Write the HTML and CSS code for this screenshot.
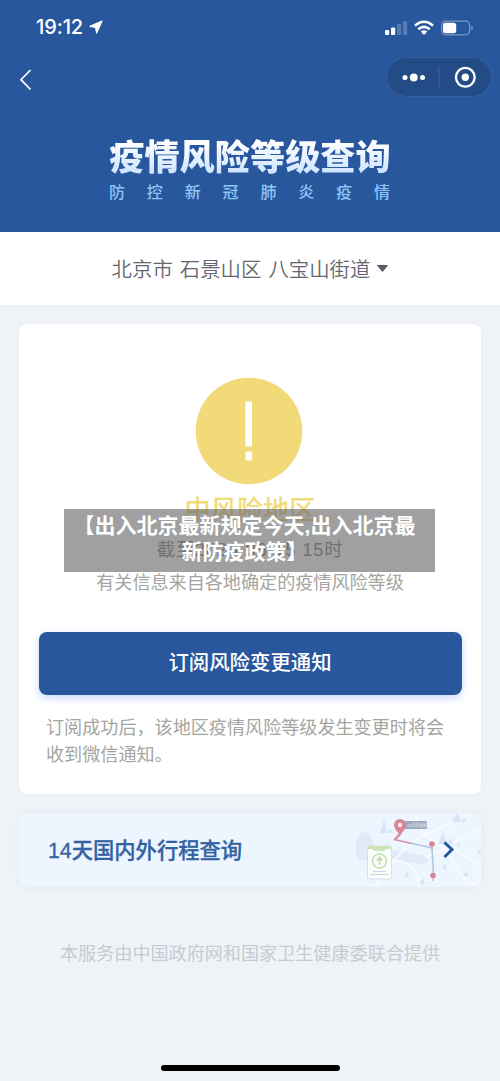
FILE: index.html
```html
<!DOCTYPE html>
<html lang="zh-CN">
<head>
<meta charset="utf-8">
<title>疫情风险等级查询</title>
<link rel="stylesheet" href="styles.css">
</head>
<body>
<header class="hero">
  <div class="status">
    <span class="clock">19:12</span>
    <svg class="locate" width="14" height="14" viewBox="0 0 14 14"><path d="M13 1L1 6.300L6.600 7.500L7.600 13Z" fill="#fff" stroke="#fff" stroke-width="1.200" stroke-linejoin="round"/></svg>
    <svg class="signals" width="92" height="18" viewBox="0 0 92 18">
      <g fill="#fff"><rect x="1" y="10" width="4.2" height="5" rx="1"/><rect x="7" y="7.5" width="4.2" height="7.5" rx="1"/><g opacity=".22"><rect x="13" y="4" width="4.2" height="11" rx="1"/><rect x="19" y="1" width="4.2" height="14" rx="1"/></g></g>
      <g fill="none" stroke="#fff" stroke-width="2.5"><path d="M31 5.6Q40 -2 49 5.6"/><path d="M34.3 9.3Q40 4.5 45.700 9.300"/></g><path d="M36.700 11.500Q40 8.800 43.300 11.500L40 15Z" fill="#fff"/>
      <rect x="57.600" y="1.200" width="28" height="13.600" rx="4" fill="none" stroke="#fff" stroke-opacity=".4" stroke-width="1.200"/><rect x="59" y="2.800" width="13.200" height="10.400" rx="2.500" fill="#fff"/><path d="M87.300 5.500Q91 8 87.300 10.500Z" fill="#fff" opacity=".4"/>
    </svg>
  </div>
  <div class="nav">
    <svg class="back" width="14" height="22" viewBox="0 0 14 22"><path d="M11.500 1L2 10.700L11.500 20.500" fill="none" stroke="#fff" stroke-width="1.700"/></svg>
    <div class="capsule">
      <svg width="106" height="40" viewBox="0 0 106 40"><g fill="#fff"><circle cx="19" cy="20.500" r="2.500"/><circle cx="27.800" cy="20.500" r="3.900"/><circle cx="36.500" cy="20.500" r="2.500"/><circle cx="79.300" cy="20.300" r="3.700"/></g><path d="M53 9V31" stroke="#fff" stroke-opacity=".13"/><circle cx="79.300" cy="20.300" r="9.400" fill="none" stroke="#fff" stroke-width="2.300"/></svg>
    </div>
  </div>
  <h1 class="title">疫情风险等级查询</h1>
  <p class="subtitle"><span>防</span><span>控</span><span>新</span><span>冠</span><span>肺</span><span>炎</span><span>疫</span><span>情</span></p>
</header>
<div class="region"><span>北京市 石景山区 八宝山街道</span><svg width="11" height="7" viewBox="0 0 11 7"><path d="M.5 .5H10.500L5.500 6.500Z" fill="#595d66" stroke="#595d66" stroke-linejoin="round"/></svg></div>
<main class="content">
  <section class="card">
    <svg class="alert" width="108" height="108" viewBox="0 0 108 108"><circle cx="54" cy="54" r="53.300" fill="#f3da78"/><path d="M50.500 24.500H57V69.500H50.500ZM50.500 74.500H57V83.500H50.500Z" fill="#fff"/></svg>
    <h2 class="level">中风险地区</h2>
    <p class="date">截至2020-06-15 15时</p>
    <p class="source">有关信息来自各地确定的疫情风险等级</p>
    <div class="button">订阅风险变更通知</div>
    <p class="note">订阅成功后，该地区疫情风险等级发生变更时将会<br>收到微信通知。</p>
    <div class="overlay">【出入北京最新规定今天,出入北京最<br>新防疫政策】</div>
  </section>
  <section class="trip">
    <span class="trip-text">14天国内外行程查询</span>
    <svg class="map" width="142" height="74" viewBox="0 0 142 74">
      <path d="M20 20Q29 15 35 34L83 42Q95 49 82 51L49 47L20 47Q11 40 20 20" fill="#e0eaf8"/>
      <g fill="none" stroke="#f7fbff" stroke-width="2"><path d="M35 74Q61 32 87 21T128 0M76 0Q79 20 92 26T118 56T142 64M86 44L109 33L142 54M44 48Q78 44 79 74M110 31L142 15"/></g>
      <g fill="#d6e6f8"><path d="M40 20L44 7L48 20ZM48 20L50 15L53 20ZM112 9L117-1L122 9ZM122 9L124 4L127 9ZM98 31L103 19L108 31ZM108 31L111 24L113 31ZM117 34L119 29L121 34Z"/><path d="M65 64L67 58L69 64ZM80 71L83 64L85 71ZM102 56L105 50L107 56ZM123 63L126 58L128 63ZM137 41L139 36L141 41Z"/></g>
      <rect x="61" y="8" width="26" height="8" rx="1.500" fill="#9aabc2"/><text x="67" y="14" class="map-label">14天内途经</text>
      <path d="M61 20L54.500 27" stroke="#d58a98" stroke-width="2.500" fill="none"/><path d="M54 26.500L72 30.500" stroke="#cf94a4" stroke-width="1.500"/><path d="M72 30.500L92 35L93.500 62" stroke="#b4c8e2" stroke-width="1.700" fill="none"/>
      <path d="M60 22Q54 16 54 12A5.800 5.800 0 0 1 66 12Q66 16 60 22Z" fill="#d88793"/><circle cx="60" cy="12" r="2.200" fill="#f8edf4"/>
      <g fill="#d58794"><circle cx="92" cy="31" r="2.800"/><circle cx="93" cy="62.500" r="2.800"/></g><path d="M92 34V37M93 65V68" stroke="#c9a4b7"/>
      <rect x="27.500" y="33" width="24" height="33" rx="2" fill="#fbfdfb" stroke="#d5e1ed"/><path d="M28 33H51V36H46L44 38H34L32 36H28Z" fill="#cce4b8"/>
      <g fill="none" stroke="#bfdfab" stroke-width="1.400"><circle cx="39.500" cy="48" r="7"/><path d="M39.500 52V45M36.700 47.500L39.500 44.500L42.300 47.500" stroke-width="1.800"/></g><path d="M33 58.500H46M30 61.500H49" stroke="#ccd5df"/>
      <path d="M104.500 29.500L112 36.500L104.500 44" fill="none" stroke="#24549b" stroke-width="3"/>
    </svg>
  </section>
  <p class="provider">本服务由中国政府网和国家卫生健康委联合提供</p>
  <div class="home"></div>
</main>
</body>
</html>
```

FILE: styles.css
```css
* { box-sizing: border-box; }
body { margin: 0; width: 500px; height: 1081px; overflow: hidden; background: #eff3f7; font-family: "Liberation Sans", "Noto Sans CJK SC", sans-serif; }
h1, h2, p { margin: 0; }
svg { display: block; flex: none; }
.hero { height: 232px; background: #28579e; color: #fff; }
.status { display: flex; height: 54px; padding: 16px 24px 0 36px; align-items: flex-start; }
.clock { font: 500 20px/23px Inter, sans-serif; letter-spacing: -.1px; width: 48px; white-space: nowrap; }
.locate { margin: 4px 0 0 5px; }
.signals { margin: 4px 0 0 auto; }
.nav { display: flex; justify-content: space-between; align-items: center; padding: 3px 8px 0 19px; }
.back { margin-top: 5px; }
.capsule { width: 106px; height: 40px; border-radius: 20px; background: #234c87; box-shadow: inset 0 0 0 1px #365f9c; }
.title { margin-top: 33px; height: 50px; font: 900 35.2px/50px "Noto Sans CJK SC", sans-serif; text-align: center; white-space: nowrap; color: transparent; background: linear-gradient(#fff 25%, #d2e6ff 80%); background-clip: text; -webkit-background-clip: text; }
.subtitle { display: flex; justify-content: space-between; padding: 0 110px 0 109px; height: 24px; font: 500 16px/22px "Noto Sans CJK SC", sans-serif; color: #8fc6f6; }
.region { height: 73px; padding-bottom: 1px; background: #fff; display: flex; align-items: center; justify-content: center; gap: 7px; color: #63666f; font-size: 20.4px; white-space: nowrap; }
.region span { font-family: "Noto Sans CJK SC", sans-serif; font-weight: 350; word-spacing: 2.500px; line-height: 28px; margin-top: -1px; }
.content { padding: 19px 19px 0; }
.card { position: relative; height: 470px; background: #fff; border-radius: 8px; padding: 53px 20px 0; box-shadow: 0 0 5px #e8edf2; display: flex; flex-direction: column; align-items: center; }
.alert { margin-right: 2px; }
.level { margin-top: 4px; height: 38px; font: 500 26.200px/38px "Noto Sans CJK SC", sans-serif; color: #f3da78; }
.date { margin-top: 9px; height: 28px; font-size: 18.200px; line-height: 28px; letter-spacing: .85px; color: #888; white-space: nowrap; }
.source { margin-top: 5px; height: 28px; font-size: 18.1px; line-height: 28px; color: #a4a5a0; white-space: nowrap; }
.button { margin-top: 35px; width: 423px; height: 63px; flex: none; border-radius: 8px; background: #28579e; box-shadow: 0 3px 8px #c9d7fb; color: #fff; text-align: center; font-size: 20.4px; font-weight: 500; line-height: 62px; }
.note { margin-top: 20px; align-self: flex-start; padding-left: 7px; font-size: 18.1px; line-height: 27px; color: #a4a5a0; white-space: nowrap; }
.overlay { position: absolute; left: 45px; top: 185px; width: 371px; height: 63px; padding: 4px 10px 0 0; background: rgba(96, 96, 96, .6); color: #fff; font-size: 21px; font-weight: 700; line-height: 26px; text-align: center; white-space: nowrap; }
.trip { margin-top: 19px; height: 74px; display: flex; align-items: center; border-radius: 8px; overflow: hidden; background: #edf5ff; box-shadow: 0 0 6px #e2e8ef; }
.trip-text { padding: 0 0 4px 29px; color: #3461a2; font-size: 21.300px; font-weight: 500; -webkit-text-stroke: .3px #3461a2; white-space: nowrap; }
.map { margin: 0 -1px 0 auto; }
.map-label { font-size: 4px; fill: #eef4fa; }
.provider { margin-top: 54px; height: 27px; text-align: center; font-size: 18.1px; line-height: 27px; color: #c5ccd2; white-space: nowrap; }
.home { width: 179px; height: 6px; margin: 97px auto 0; border-radius: 3px; background: #000; }
```
